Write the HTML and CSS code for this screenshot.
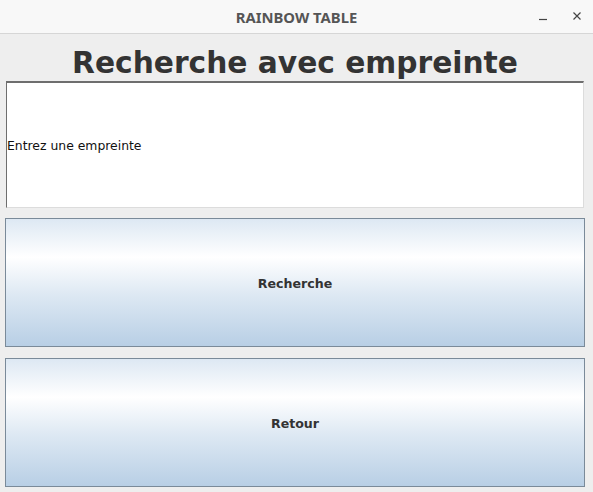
FILE: index.html
```html
<!DOCTYPE html>
<html lang="fr">
<head>
<meta charset="utf-8">
<title>RAINBOW TABLE</title>
<link rel="stylesheet" href="styles.css">
</head>
<body>
<div class="window">
  <div class="titlebar">
    <span class="title">RAINBOW TABLE</span>
    <div class="controls">
      <svg class="ctl" width="12" height="12" viewBox="0 0 12 12"><path d="M2 9.5h8" stroke="#444" stroke-width="1.2"/></svg>
      <svg class="ctl" width="12" height="12" viewBox="0 0 12 12"><path d="M2.5 2.5l7 7M9.5 2.5l-7 7" stroke="#444" stroke-width="1.2"/></svg>
    </div>
  </div>
  <div class="content">
    <h1 class="heading">Recherche avec empreinte</h1>
    <div class="field">Entrez une empreinte</div>
    <button class="btn first">Recherche</button>
    <button class="btn">Retour</button>
  </div>
</div>
</body>
</html>
```

FILE: styles.css
```css
html, body {
  margin: 0;
  padding: 0;
}
body {
  width: 593px;
  height: 492px;
  background: #eeeeee;
  font-family: "DejaVu Sans", sans-serif;
  overflow: hidden;
}
.window {
  display: flex;
  flex-direction: column;
  height: 492px;
}
.titlebar {
  position: relative;
  height: 33px;
  background: #f8f8f8;
  border-bottom: 1px solid #d6d6d6;
  display: flex;
  align-items: center;
  justify-content: center;
}
.title {
  font-family: "Noto Sans", sans-serif;
  font-weight: bold;
  font-size: 14.8px;
  color: #555555;
}
.controls {
  position: absolute;
  right: 10px;
  top: 10px;
  display: flex;
  gap: 22px;
}
.ctl {
  display: block;
}
.content {
  display: flex;
  flex-direction: column;
  padding: 0 8px 0 5px;
}
.heading {
  margin: 0;
  height: 47px;
  line-height: 57px;
  text-align: center;
  font-size: 29.7px;
  font-weight: bold;
  color: #333333;
}
.field {
  margin: 0 1px;
  height: 123px;
  background: #ffffff;
  border-top: 2px solid #6e6e6e;
  border-left: 1px solid #6e6e6e;
  border-right: 1px solid #dcdcdc;
  border-bottom: 1px solid #dcdcdc;
  display: flex;
  align-items: center;
  font-size: 12.4px;
  color: #111111;
  padding-top: 1px;
}
.btn {
  margin: 10px 0 0 0;
  height: 129px;
  border: 1px solid #7a8a99;
  background: linear-gradient(to bottom, #dde8f3 0%, #ffffff 30%, #dde8f3 60%, #b8cfe5 100%);
  font-family: "DejaVu Sans", sans-serif;
  font-weight: bold;
  font-size: 12.6px;
  color: #333333;
  padding: 2px 0 0 0;
}
.btn + .btn {
  margin-top: 11px;
}
```
